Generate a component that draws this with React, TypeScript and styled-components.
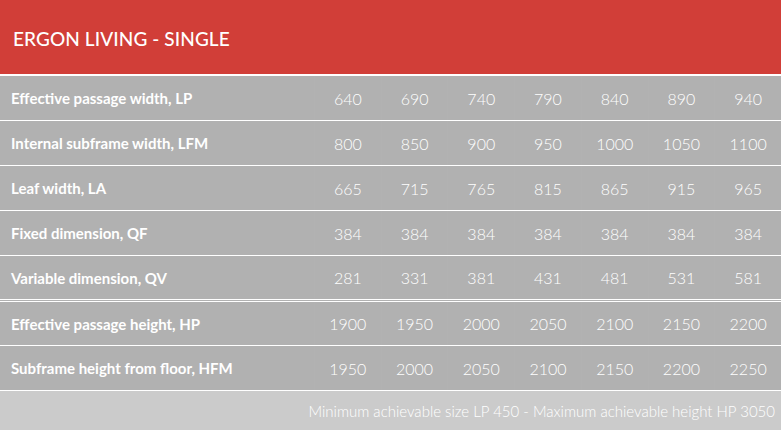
import React from "react";
import styled, { createGlobalStyle } from "styled-components";

const Global = createGlobalStyle`
  html, body { margin: 0; padding: 0; background: #ffffff; }
  body { font-family: Lato, "Open Sans", sans-serif; }
`;

const Table = styled.div`
  width: 781px;
  background: #ffffff;
  color: #ffffff;
`;

const Header = styled.div`
  height: 76px;
  background: #d13e38;
  border-bottom: 2px solid #ffffff;
  display: flex;
  align-items: center;
  padding-left: 13px;
  padding-top: 2px;
  box-sizing: border-box;
  font-size: 19px;
  font-weight: 500;
  letter-spacing: 0.1px;
`;

const Row = styled.div<{ $h: number; $double?: boolean }>`
  display: grid;
  grid-template-columns: 314px repeat(7, 1fr);
  height: ${(p) => p.$h}px;
  background: #b1b1b1;
  border-bottom: ${(p) => (p.$double ? "3px double #ffffff" : "1px solid #ffffff")};
`;

const Label = styled.div`
  display: flex;
  align-items: center;
  padding-left: 11px;
  font-size: 15px;
  font-weight: 700;
`;

const Value = styled.div`
  display: flex;
  align-items: center;
  justify-content: center;
  font-size: 16px;
  font-weight: 300;
  border-left: 1px solid rgba(255, 255, 255, 0.025);
`;

const Footer = styled.div`
  height: 39px;
  background: #cbcbcb;
  border-bottom: 1px solid #ffffff;
  display: flex;
  align-items: center;
  justify-content: flex-end;
  padding-right: 6px;
  font-size: 15px;
  font-weight: 300;
`;

const rows: { label: string; values: number[]; h: number; double?: boolean }[] = [
  { label: "Effective passage width, LP", values: [640, 690, 740, 790, 840, 890, 940], h: 44 },
  { label: "Internal subframe width, LFM", values: [800, 850, 900, 950, 1000, 1050, 1100], h: 44 },
  { label: "Leaf width, LA", values: [665, 715, 765, 815, 865, 915, 965], h: 44 },
  { label: "Fixed dimension, QF", values: [384, 384, 384, 384, 384, 384, 384], h: 44 },
  { label: "Variable dimension, QV", values: [281, 331, 381, 431, 481, 531, 581], h: 43, double: true },
  { label: "Effective passage height, HP", values: [1900, 1950, 2000, 2050, 2100, 2150, 2200], h: 43 },
  { label: "Subframe height from floor, HFM", values: [1950, 2000, 2050, 2100, 2150, 2200, 2250], h: 44 },
];

export default function App() {
  return (
    <>
      <Global />
      <Table>
        <Header>ERGON LIVING - SINGLE</Header>
        {rows.map((r) => (
          <Row key={r.label} $h={r.h} $double={r.double}>
            <Label>{r.label}</Label>
            {r.values.map((v, i) => (
              <Value key={i}>{v}</Value>
            ))}
          </Row>
        ))}
        <Footer>Minimum achievable size LP 450 - Maximum achievable height HP 3050</Footer>
      </Table>
    </>
  );
}
